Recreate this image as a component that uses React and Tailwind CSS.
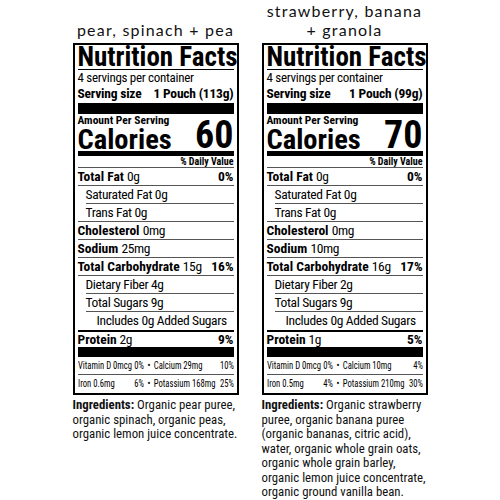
import React from "react";

const cond = "font-['Roboto_Condensed','Roboto',sans-serif]";

const labels = [
  {
    title: ["pear, spinach + pea"],
    serving: "1 Pouch (113g)",
    calories: "60",
    sodium: "25mg",
    carb: "15g",
    carbDv: "16%",
    fiber: "4g",
    sugars: "9g",
    protein: "2g",
    proteinDv: "9%",
    vitD: ["Vitamin D 0mcg", "0%"],
    calcium: ["Calcium 29mg", "10%"],
    iron: ["Iron 0.6mg", "6%"],
    potassium: ["Potassium 168mg", "25%"],
    ingredients: [
      "Organic pear puree,",
      "organic spinach, organic peas,",
      "organic lemon juice concentrate.",
    ],
  },
  {
    title: ["strawberry, banana", "+ granola"],
    serving: "1 Pouch (99g)",
    calories: "70",
    sodium: "10mg",
    carb: "16g",
    carbDv: "17%",
    fiber: "2g",
    sugars: "9g",
    protein: "1g",
    proteinDv: "5%",
    vitD: ["Vitamin D 0mcg", "0%"],
    calcium: ["Calcium 10mg", "4%"],
    iron: ["Iron 0.5mg", "4%"],
    potassium: ["Potassium 210mg", "30%"],
    ingredients: [
      "Organic strawberry",
      "puree, organic banana puree",
      "(organic bananas, citric acid),",
      "water, organic whole grain oats,",
      "organic whole grain barley,",
      "organic lemon juice concentrate,",
      "organic ground vanilla bean.",
    ],
  },
];

function Row({ label, value, dv, indent = 0, line = "full" }) {
  const pad = indent === 2 ? "pl-[19px]" : indent === 1 ? "pl-[8px]" : "";
  return (
    <div className={`relative flex h-[18px] justify-between whitespace-nowrap text-[13.5px] leading-[17px] ${pad}`}>
      <span className="tracking-[-0.35px]">
        {label && <b className="tracking-normal">{label} </b>}
        {value}
      </span>
      {dv && <b>{dv}</b>}
      {line === "full" && <div className="absolute bottom-0 left-0 right-0 h-px bg-[#555]" />}
      {line === "indent" && <div className="absolute bottom-0 left-[8px] right-0 h-px bg-[#555]" />}
    </div>
  );
}

function Micro({ a, b, line }) {
  return (
    <div className={`h-[18px] ${line ? "border-b border-[#555]" : "h-[17px]"}`}>
      <div className="flex w-[208px] origin-left scale-x-75 whitespace-nowrap text-[11.5px] leading-[17px]">
        <div className="flex w-[88px] justify-between">
          <span>{a[0]}</span>
          <span>{a[1]}</span>
        </div>
        <span className="w-[13px] text-center">•</span>
        <div className="flex flex-1 justify-between">
          <span>{b[0]}</span>
          <span>{b[1]}</span>
        </div>
      </div>
    </div>
  );
}

function Label({ d }) {
  return (
    <div className="flex w-[166px] flex-col">
      <div className="flex h-[43px] flex-col items-center justify-end pb-[4px] font-['Lato',sans-serif] text-[16px] leading-[19px] tracking-[1.2px] whitespace-nowrap text-[#111]">
        {d.title.map((t) => (
          <div key={t}>{t}</div>
        ))}
      </div>
      <div className={`border-2 border-black px-[3px] text-black ${cond}`}>
        <div className="h-[25px] border-b border-black text-[27px] font-bold leading-[25px] whitespace-nowrap">
          Nutrition Facts
        </div>
        <div className="h-[15px] text-[13px] leading-[15px] tracking-[-0.3px]">4 servings per container</div>
        <div className="flex h-[18px] justify-between whitespace-nowrap text-[13.5px] font-bold leading-[17px] tracking-[-0.2px]">
          <span>Serving size</span>
          <span>{d.serving}</span>
        </div>
        <div className="h-[11px] bg-black" />
        <div className="mt-[1px] h-[10px] text-[11.5px] font-bold leading-[10px]">Amount Per Serving</div>
        <div className="flex h-[24px] items-end justify-between font-bold">
          <span className="text-[28.5px] leading-[0.68]">Calories</span>
          <span className="text-[38px] leading-[0.68]">{d.calories}</span>
        </div>
        <div className="mt-[2px] h-[5px] bg-black" />
        <div className="h-[12px] border-b border-[#555] text-right text-[10px] font-bold leading-[11px]">
          % Daily Value
        </div>
        <Row label="Total Fat" value="0g" dv="0%" />
        <Row value="Saturated Fat 0g" indent={1} line="indent" />
        <Row value="Trans Fat 0g" indent={1} />
        <Row label="Cholesterol" value="0mg" />
        <Row label="Sodium" value={d.sodium} />
        <Row label="Total Carbohydrate" value={d.carb} dv={d.carbDv} />
        <Row value={`Dietary Fiber ${d.fiber}`} indent={1} line="indent" />
        <Row value={`Total Sugars ${d.sugars}`} indent={1} line="indent" />
        <Row value="Includes 0g Added Sugars" indent={2} line="none" />
        <div className="h-[2px] bg-black" />
        <div className="flex h-[15px] justify-between text-[13.5px] leading-[15px]">
          <span className="tracking-[-0.35px]">
            <b className="tracking-normal">Protein</b> {d.protein}
          </span>
          <b>{d.proteinDv}</b>
        </div>
        <div className="h-[10px] bg-black" />
        <Micro a={d.vitD} b={d.calcium} line />
        <Micro a={d.iron} b={d.potassium} />
      </div>
      <p className={`mt-[3px] text-[12.8px] leading-[14.5px] whitespace-nowrap text-[#111] ${cond}`}>
        <b>Ingredients:</b> {d.ingredients[0]}
        {d.ingredients.slice(1).map((l) => (
          <React.Fragment key={l}>
            <br />
            {l}
          </React.Fragment>
        ))}
      </p>
    </div>
  );
}

export default function App() {
  return (
    <div className="flex h-[500px] w-[500px] justify-center gap-[23px] overflow-hidden bg-white">
      {labels.map((d) => (
        <Label key={d.calories} d={d} />
      ))}
    </div>
  );
}
